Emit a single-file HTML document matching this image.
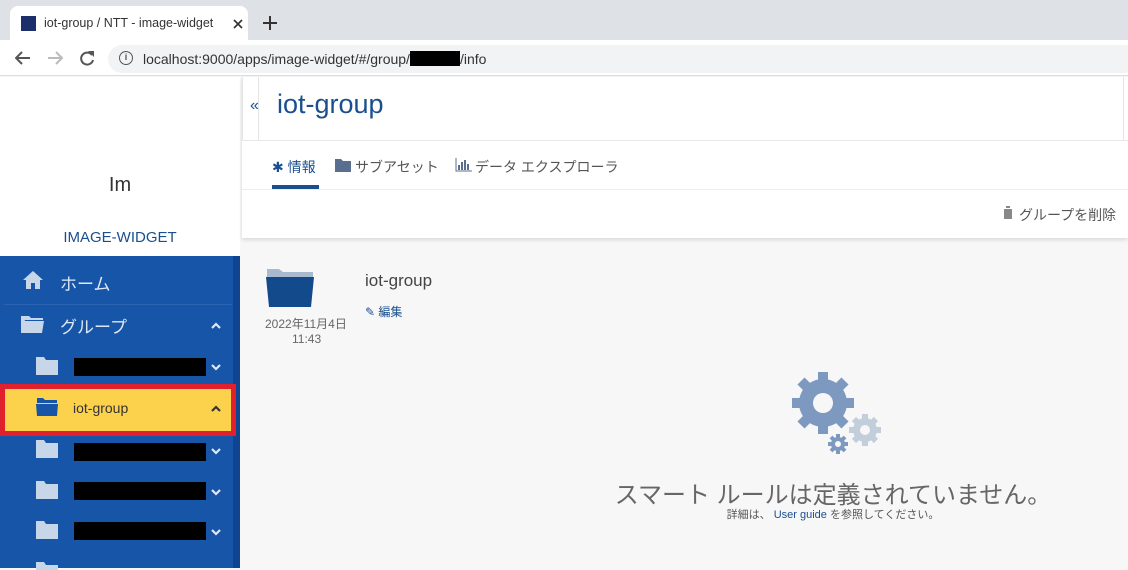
<!DOCTYPE html>
<html><head><meta charset="utf-8"><style>
*{box-sizing:border-box;margin:0;padding:0}
body{width:1128px;height:568px;overflow:hidden;font-family:"Liberation Sans","Noto Sans CJK JP",sans-serif;background:#f7f7f7;position:relative}
.a{position:absolute}
.blk{position:absolute;background:#000}
</style></head><body>
<!-- browser chrome -->
<div class="a" style="left:0;top:0;width:1128px;height:40px;background:#dee1e6"></div>
<div class="a" style="left:10px;top:6px;width:238px;height:34px;background:#fff;border-radius:8px 8px 0 0"></div>
<div class="a" style="left:21px;top:16px;width:15px;height:15px;background:#1d2f6a"></div>
<div class="a" style="left:44px;top:16px;font-size:12.5px;color:#333">iot-group / NTT - image-widget</div>
<svg class="a" style="left:233px;top:19px" width="10" height="10"><path d="M1 1l8 8M9 1L1 9" stroke="#333" stroke-width="1.6"/></svg>
<svg class="a" style="left:263px;top:16px" width="14" height="14"><path d="M7 0v14M0 7h14" stroke="#333" stroke-width="2"/></svg>
<div class="a" style="left:0;top:40px;width:1128px;height:36px;background:#fff;border-bottom:1px solid #ddd"></div>
<svg class="a" style="left:15px;top:51px" width="16" height="14"><path d="M15 7H2M7 1L1 7l6 6" stroke="#555" stroke-width="2" fill="none"/></svg>
<svg class="a" style="left:47px;top:51px" width="16" height="14"><path d="M1 7h13M9 1l6 6-6 6" stroke="#bbb" stroke-width="2" fill="none"/></svg>
<svg class="a" style="left:79px;top:50px" width="16" height="16"><path d="M13 5A6 6 0 1 0 14 10" stroke="#555" stroke-width="2" fill="none"/><path d="M9 1h6v6z" fill="#555"/></svg>
<div class="a" style="left:108px;top:45px;width:1030px;height:28px;background:#f1f3f4;border-radius:14px"></div>
<div class="a" style="left:119px;top:51px;width:14px;height:14px;border:1.5px solid #555;border-radius:50%;font-size:9px;text-align:center;line-height:11px;color:#555;font-weight:bold">i</div>
<div class="a" style="left:143px;top:51px;font-size:14px;color:#333">localhost:9000/apps/image-widget/#/group/<span style="display:inline-block;width:50px;height:15px;background:#000;vertical-align:-2px"></span>/info</div>
<!-- sidebar -->
<div class="a" style="left:0;top:77px;width:240px;height:179px;background:#fff"></div>
<div class="a" style="left:0;top:174px;width:240px;text-align:center;font-size:20px;color:#333">Im</div>
<div class="a" style="left:0;top:229px;width:240px;text-align:center;font-size:15px;color:#1a4f8f">IMAGE-WIDGET</div>
<div class="a" style="left:0;top:256px;width:233px;height:312px;background:#1655a8"></div>
<div class="a" style="left:233px;top:256px;width:7px;height:312px;background:#0f4590"></div>
<div class="a" style="left:4px;top:304px;width:228px;height:1px;background:#2a64b0"></div>
<svg class="a" style="left:22px;top:270px" width="22" height="20" viewBox="0 0 22 20"><path d="M11 1L1 10h3v9h5v-6h4v6h5v-9h3z" fill="#c8d6ea"/></svg>
<div class="a" style="left:60px;top:270px;font-size:17px;color:#dfe8f5">ホーム</div>
<svg class="a" style="left:20px;top:314px" width="26" height="20" viewBox="0 0 26 20"><path d="M1 2h8l2 2h12v2H5L1 19z" fill="#c8d6ea"/><path d="M1 7h23l-2 12H1z" fill="#c8d6ea"/></svg>
<div class="a" style="left:60px;top:313px;font-size:17px;color:#dfe8f5">グループ</div>
<svg class="a" style="left:211px;top:322px" width="10" height="7"><path d="M1 6l4-4 4 4" stroke="#dfe8f5" stroke-width="2.2" fill="none"/></svg>
<svg class="a" style="left:36px;top:357px" width="22" height="18"><path d="M0 0h8l2 3h12v15H0z" fill="#c8d6ea"/></svg>
<div class="blk" style="left:74px;top:358px;width:132px;height:18px"></div>
<svg class="a" style="left:211px;top:364px" width="10" height="7"><path d="M1 1l4 4 4-4" stroke="#dfe8f5" stroke-width="2.2" fill="none"/></svg>
<div class="a" style="left:0;top:384px;width:236px;height:52px;background:#e0202c"></div>
<div class="a" style="left:5px;top:389px;width:226px;height:42px;background:#fcd14c"></div>
<svg class="a" style="left:36px;top:398px" width="22" height="18"><path d="M1 0h6l2 2h12v3H1z" fill="#1655a8"/><path d="M0 6h22l-1 12H1z" fill="#1655a8"/></svg>
<div class="a" style="left:73px;top:400px;font-size:14px;color:#333">iot-group</div>
<svg class="a" style="left:211px;top:405px" width="10" height="7"><path d="M1 6l4-4 4 4" stroke="#333" stroke-width="2.2" fill="none"/></svg>
<svg class="a" style="left:36px;top:440px" width="22" height="18"><path d="M0 0h8l2 3h12v15H0z" fill="#c8d6ea"/></svg>
<div class="blk" style="left:74px;top:443px;width:132px;height:18px"></div>
<svg class="a" style="left:211px;top:448px" width="10" height="7"><path d="M1 1l4 4 4-4" stroke="#dfe8f5" stroke-width="2.2" fill="none"/></svg>
<svg class="a" style="left:36px;top:481px" width="22" height="18"><path d="M0 0h8l2 3h12v15H0z" fill="#c8d6ea"/></svg>
<div class="blk" style="left:74px;top:482px;width:132px;height:18px"></div>
<svg class="a" style="left:211px;top:489px" width="10" height="7"><path d="M1 1l4 4 4-4" stroke="#dfe8f5" stroke-width="2.2" fill="none"/></svg>
<svg class="a" style="left:36px;top:521px" width="22" height="18"><path d="M0 0h8l2 3h12v15H0z" fill="#c8d6ea"/></svg>
<div class="blk" style="left:74px;top:522px;width:132px;height:18px"></div>
<svg class="a" style="left:211px;top:529px" width="10" height="7"><path d="M1 1l4 4 4-4" stroke="#dfe8f5" stroke-width="2.2" fill="none"/></svg>
<svg class="a" style="left:36px;top:562px" width="22" height="8"><path d="M0 0h8l2 3h12v5H0z" fill="#c8d6ea"/></svg>
<!-- header -->
<div class="a" style="left:242px;top:77px;width:886px;height:161px;background:#fff;box-shadow:0 2px 4px rgba(0,0,0,.12)"></div>
<div class="a" style="left:242px;top:77px;width:1px;height:63px;background:#e5e5e5"></div>
<div class="a" style="left:258px;top:77px;width:1px;height:63px;background:#e5e5e5"></div>
<div class="a" style="left:1123px;top:77px;width:1px;height:63px;background:#e5e5e5"></div>
<div class="a" style="left:242px;top:140px;width:886px;height:1px;background:#e8e8e8"></div>
<div class="a" style="left:250px;top:97px;font-size:16px;color:#1a4f8f">«</div>
<div class="a" style="left:277px;top:89px;font-size:27px;color:#1a4f8f">iot-group</div>
<div class="a" style="left:272px;top:157px;font-size:14px;color:#1a4f8f">✱ 情報</div>
<svg class="a" style="left:335px;top:158px" width="17" height="14"><path d="M0 1h6l2 2h8v11H0z" fill="#5a6f90"/></svg>
<div class="a" style="left:355px;top:157px;font-size:14px;color:#555">サブアセット</div>
<svg class="a" style="left:455px;top:158px" width="17" height="14"><path d="M1 0v13h16" stroke="#5a6f90" fill="none"/><path d="M4 7v5M7 4v8M10 2v10M13 6v6" stroke="#5a6f90" stroke-width="2"/></svg>
<div class="a" style="left:475px;top:157px;font-size:14px;color:#555">データ エクスプローラ</div>
<div class="a" style="left:272px;top:185px;width:47px;height:4px;background:#1a4f8f"></div>
<div class="a" style="left:242px;top:189px;width:886px;height:1px;background:#ececec"></div>
<svg class="a" style="left:1003px;top:206px" width="10" height="13"><path d="M0 2h10M3 2V0h4v2M1 3h8v10H1z" fill="#888"/></svg>
<div class="a" style="left:1019px;top:205px;font-size:14px;color:#555">グループを削除</div>
<!-- content -->
<svg class="a" style="left:265px;top:265px" width="50" height="42" viewBox="0 0 50 42"><path d="M2 4h12l4 3h30v7H2z" fill="#a9b9ce"/><path d="M1 12h48l-3 30H4z" fill="#134a8c"/></svg>
<div class="a" style="left:265px;top:315px;font-size:12px;color:#666">2022年11月4日</div>
<div class="a" style="left:292px;top:332px;font-size:12px;color:#666">11:43</div>
<div class="a" style="left:365px;top:271px;font-size:17px;color:#444">iot-group</div>
<div class="a" style="left:365px;top:303px;font-size:12px;color:#1a4f8f">✎ 編集</div>
<svg class="a" style="left:790px;top:372px" width="95" height="85" viewBox="0 0 95 85">
<g fill="#7d99bf"><circle cx="33" cy="31" r="24"/>
<g stroke="#7d99bf" stroke-width="10"><path d="M33 0v62M2 31h62M11 9l44 44M55 9L11 53"/></g></g>
<circle cx="33" cy="31" r="10" fill="#f7f7f7"/>
<g fill="#c3cedd"><circle cx="75" cy="58" r="12"/><g stroke="#c3cedd" stroke-width="6"><path d="M75 42v32M59 58h32M64 47l22 22M86 47L64 69"/></g></g>
<circle cx="75" cy="58" r="5" fill="#f7f7f7"/>
<g fill="#7d99bf"><circle cx="48" cy="72" r="7"/><g stroke="#7d99bf" stroke-width="4"><path d="M48 62v20M38 72h20M41 65l14 14M55 65L41 79"/></g></g>
<circle cx="48" cy="72" r="3" fill="#f7f7f7"/>
</svg>
<div class="a" style="left:560px;top:475px;width:546px;text-align:center;font-size:24px;color:#666">スマート ルールは定義されていません。</div>
<div class="a" style="left:560px;top:506px;width:546px;text-align:center;font-size:11px;color:#555">詳細は、 <span style="color:#1a4f8f">User guide</span> を参照してください。</div>
</body></html>
